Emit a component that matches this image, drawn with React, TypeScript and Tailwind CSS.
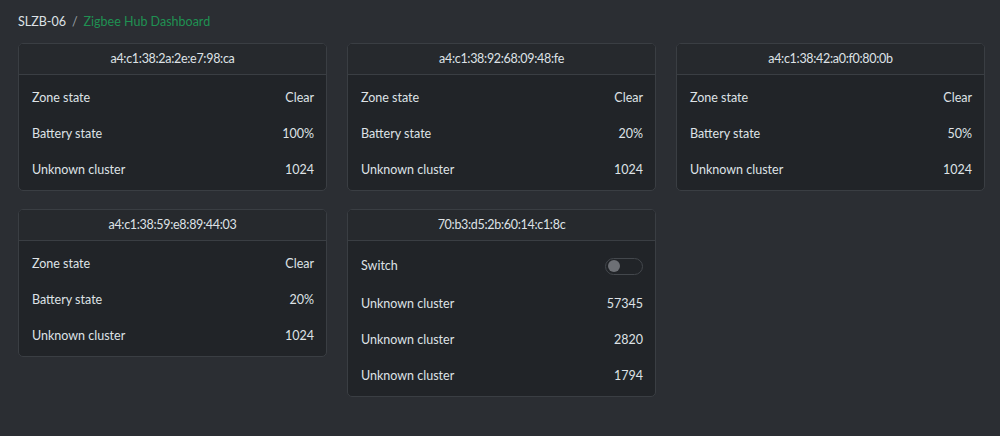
type Row = { label: string; value?: string; toggle?: boolean };

interface Device {
  id: string;
  rows: Row[];
}

const devices: Device[] = [
  {
    id: 'a4:c1:38:2a:2e:e7:98:ca',
    rows: [
      { label: 'Zone state', value: 'Clear' },
      { label: 'Battery state', value: '100%' },
      { label: 'Unknown cluster', value: '1024' },
    ],
  },
  {
    id: 'a4:c1:38:92:68:09:48:fe',
    rows: [
      { label: 'Zone state', value: 'Clear' },
      { label: 'Battery state', value: '20%' },
      { label: 'Unknown cluster', value: '1024' },
    ],
  },
  {
    id: 'a4:c1:38:42:a0:f0:80:0b',
    rows: [
      { label: 'Zone state', value: 'Clear' },
      { label: 'Battery state', value: '50%' },
      { label: 'Unknown cluster', value: '1024' },
    ],
  },
  {
    id: 'a4:c1:38:59:e8:89:44:03',
    rows: [
      { label: 'Zone state', value: 'Clear' },
      { label: 'Battery state', value: '20%' },
      { label: 'Unknown cluster', value: '1024' },
    ],
  },
  {
    id: '70:b3:d5:2b:60:14:c1:8c',
    rows: [
      { label: 'Switch', toggle: true },
      { label: 'Unknown cluster', value: '57345' },
      { label: 'Unknown cluster', value: '2820' },
      { label: 'Unknown cluster', value: '1794' },
    ],
  },
];

function Toggle() {
  return (
    <span className="flex h-[17px] w-[38px] items-center rounded-full border border-[#43474c] bg-[#212428] px-[2px]">
      <span className="h-[12px] w-[12px] rounded-full bg-[#6d7075]" />
    </span>
  );
}

function DeviceCard({ device }: { device: Device }) {
  return (
    <div className="overflow-hidden rounded-[5px] border border-[#3a3e43] bg-[#212428]">
      <div className="flex h-[31px] items-center justify-center border-b border-[#3a3e43] bg-[#26292d] text-[12.5px] tracking-[-0.3px] text-[#dee2e6]">
        {device.id}
      </div>
      <div className="pb-[2px] pl-[13px] pr-[12px] pt-[5px]">
        {device.rows.map((r, i) => (
          <div
            key={i}
            className={`flex items-center justify-between text-[12.5px] text-[#dee2e6] ${r.toggle ? 'h-[40px]' : 'h-9'}`}
          >
            <span>{r.label}</span>
            {r.toggle ? <Toggle /> : <span>{r.value}</span>}
          </div>
        ))}
      </div>
    </div>
  );
}

export default function App() {
  return (
    <div
      className="min-h-[436px] bg-[#2b2e33] px-[18px] pt-[13px]"
      style={{ fontFamily: 'Lato, "Noto Sans", sans-serif' }}
    >
      <div className="flex h-[18px] items-center gap-[6px] text-[12.5px]">
        <span className="text-[#dee2e6]">SLZB-06</span>
        <span className="text-[#9aa0a6]">/</span>
        <span className="text-[#1f9152]">Zigbee Hub Dashboard</span>
      </div>
      <div className="mt-[12px] grid grid-cols-[309px_309px_309px] items-start gap-x-[20px] gap-y-[18px]">
        {devices.map((d) => (
          <DeviceCard key={d.id} device={d} />
        ))}
      </div>
    </div>
  );
}
